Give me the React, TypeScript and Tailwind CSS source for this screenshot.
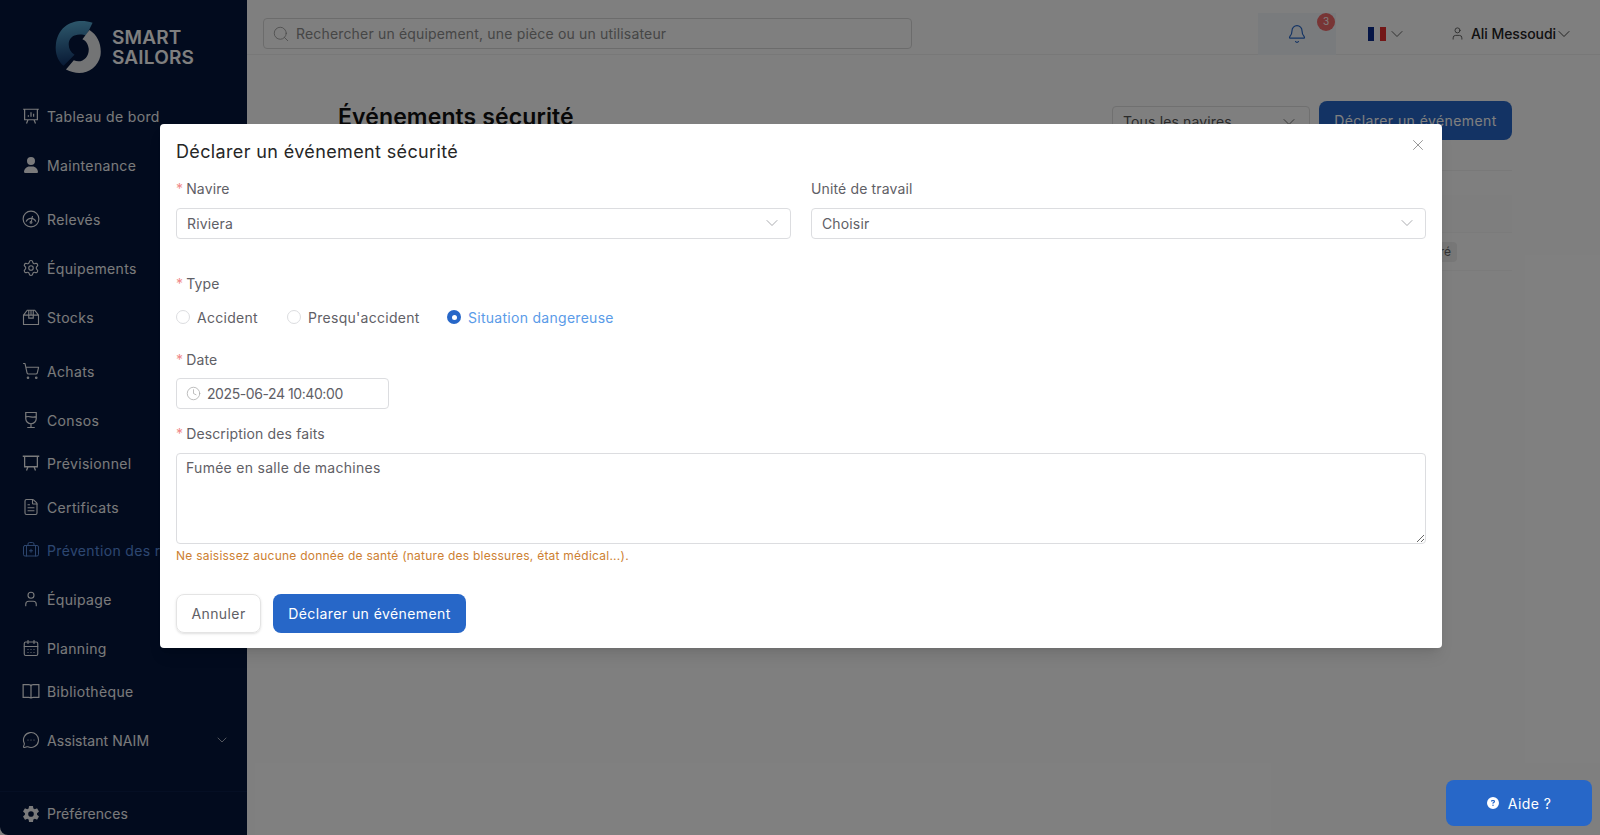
import { BriefcaseMedical, CalendarDays, ChevronDown, Clock, FileText, MessageCircleMore, Search, Settings, ShoppingCart, User, X, Bell } from "lucide-react";
import { IoSettingsSharp } from "react-icons/io5";
import { FaUser, FaCircleQuestion } from "react-icons/fa6";
import type { ReactNode } from "react";

const icon = "w-[18px] h-[18px]";

function BoardIcon() {
  return (
    <svg viewBox="0 0 24 24" className={icon} fill="none" stroke="currentColor" strokeWidth="1.6">
      <path d="M1.5 3h21M3.5 3v14h17V3M8 17l-2 5M16 17l2 5M8.5 13v-2M12 13V7M15.5 13V9" />
    </svg>
  );
}

function EaselIcon() {
  return (
    <svg viewBox="0 0 24 24" className={icon} fill="none" stroke="currentColor" strokeWidth="1.7">
      <path d="M1 3h22M3.5 3v14h17V3M8 17l-2 5M16 17l2 5M3.5 17h17" />
    </svg>
  );
}

function GaugeIcon() {
  return (
    <svg viewBox="0 0 24 24" className={icon} fill="none" stroke="currentColor" strokeWidth="1.5">
      <circle cx="12" cy="12" r="10.5" />
      <path d="M5.5 15.500a7 7 0 0 1 13 0M14 8l-1.500 7" />
      <circle cx="12" cy="16.500" r="1.200" />
    </svg>
  );
}

function BoxIcon() {
  return (
    <svg viewBox="0 0 24 24" className={icon} fill="none" stroke="currentColor" strokeWidth="1.5">
      <path d="M2 9.500h20V22H2zM2 9.500 7 3h10l5 6.500M9 3v10.500h6V3M12 3v6" />
    </svg>
  );
}

function GlassIcon() {
  return (
    <svg viewBox="0 0 24 24" className={icon} fill="none" stroke="currentColor" strokeWidth="1.6">
      <path d="M5 2h14v8a7 7 0 0 1-14 0zM5 8c4-2.500 9 2 14-.5M12 17v5M7 22h10" />
    </svg>
  );
}

function BookIcon() {
  return (
    <svg viewBox="0 0 24 24" className={icon} fill="none" stroke="currentColor" strokeWidth="1.6">
      <path d="M1.500 3.500H9c1.700 0 3 1 3 2.500 0-1.500 1.300-2.500 3-2.500h7.500v17H15c-1.700 0-3 .5-3 1.500 0-1-1.300-1.500-3-1.500H1.500zM12 6v16" />
    </svg>
  );
}

const items: { label: string; icon: ReactNode; cls: string }[] = [
  { label: "Tableau de bord", icon: <BoardIcon />, cls: "" },
  { label: "Maintenance", icon: <FaUser className="w-[16px] h-[16px] ml-[1px]" />, cls: "mt-[25px]" },
  { label: "Relevés", icon: <GaugeIcon />, cls: "mt-[30px]" },
  { label: "Équipements", icon: <Settings className={icon} strokeWidth={1.5} />, cls: "mt-[25px]" },
  { label: "Stocks", icon: <BoxIcon />, cls: "mt-[25px]" },
  { label: "Achats", icon: <ShoppingCart className={icon} strokeWidth={1.5} />, cls: "mt-[30px]" },
  { label: "Consos", icon: <GlassIcon />, cls: "mt-[25px]" },
  { label: "Prévisionnel", icon: <EaselIcon />, cls: "mt-[19px]" },
  { label: "Certificats", icon: <FileText className={icon} strokeWidth={1.5} />, cls: "mt-[20px]" },
  { label: "Prévention des risques", icon: <BriefcaseMedical className={icon} strokeWidth={1.3} />, cls: "mt-[19px] text-[#5b8fe0]" },
  { label: "Équipage", icon: <User className={icon} strokeWidth={1.5} />, cls: "mt-[25px]" },
  { label: "Planning", icon: <CalendarDays className={icon} strokeWidth={1.5} />, cls: "mt-[25px]" },
  { label: "Bibliothèque", icon: <BookIcon />, cls: "mt-[19px]" },
];

function Logo() {
  return (
    <svg viewBox="0 0 60 60" preserveAspectRatio="none" className="w-[47px] h-[55px]">
      <defs>
        <linearGradient id="ring" x1="0.5" y1="0" x2="0.6" y2="1">
          <stop offset="0" stopColor="#5aaed6" />
          <stop offset="1" stopColor="#0e2f66" />
        </linearGradient>
      </defs>
      <path d="M48 3 C 28 -3 3 4 1 28 C 0 38 5 46 11 50 L 25 38 C 15 33 15 20 25 17 C 31 15 36 16 40 17 Z" fill="url(#ring)" />
      <path d="M44 11 C 55 17 60 28 58 39 C 54 55 34 63 14 54 L 24 44 C 35 48 44 40 43 31 C 42 25 38 22 35 21 Z" fill="#e6e8ea" />
    </svg>
  );
}

function Label({ children, required = true }: { children: ReactNode; required?: boolean }) {
  return (
    <div className="text-[14px] leading-[20px] text-[#5f6066] tracking-[0.01em]">
      {required && <span className="text-[#f08a8a] mr-[3px]">*</span>}
      {children}
    </div>
  );
}

function SelectBox({ value }: { value: string }) {
  return (
    <div className="mt-[9px] h-[31px] pb-[1px] rounded border border-[#dcdde0] flex items-center justify-between pl-[10px] pr-[8px] text-[14px] text-[#5f6066] tracking-[0.01em]">
      <span>{value}</span>
      <ChevronDown className="w-[20px] h-[20px] text-[#9a9ba0]" strokeWidth={1} />
    </div>
  );
}

function Radio({ label, checked = false, cls }: { label: string; checked?: boolean; cls: string }) {
  return (
    <div className={`flex items-center gap-[7px] text-[14px] tracking-[0.02em] ${cls}`}>
      {checked ? (
        <span className="w-[14px] h-[14px] rounded-full bg-[#2767c8] flex items-center justify-center">
          <span className="w-[5px] h-[5px] rounded-full bg-white" />
        </span>
      ) : (
        <span className="w-[14px] h-[14px] rounded-full border border-[#dcdde0] bg-white" />
      )}
      <span>{label}</span>
    </div>
  );
}

export default function App() {
  return (
    <div className="relative w-full h-[835px] overflow-hidden bg-white flex font-['Inter',sans-serif]">
      <aside className="w-[247px] h-full bg-[#04163c] text-[#f4f5f7] flex flex-col rounded-bl-lg shrink-0">
        <div className="h-[104px] pl-[55px] pt-[20px] flex items-start gap-[10px]">
          <Logo />
          <div className="mt-[8px] text-[19px] leading-[20px] font-semibold text-white tracking-[0.01em]">
            SMART<br />SAILORS
          </div>
        </div>
        <nav className="flex-1 flex flex-col whitespace-nowrap overflow-hidden">
          {items.map((it) => (
            <div key={it.label} className={`h-[24px] pl-[22px] flex items-center text-[14px] tracking-[0.025em] ${it.cls}`}>
              <span className="w-[25px] flex">{it.icon}</span>
              {it.label}
            </div>
          ))}
          <div className="h-[24px] mt-[25px] pl-[22px] pr-[17px] flex items-center justify-between text-[14px] tracking-[0.005em]">
            <span className="flex items-center">
              <span className="w-[25px] flex"><MessageCircleMore className={icon} strokeWidth={1.5} /></span>
              Assistant NAIM
            </span>
            <ChevronDown className="w-[16px] h-[16px]" strokeWidth={1} />
          </div>
        </nav>
        <div className="h-[44px] border-t border-[#0b1f49] pl-[22px] flex items-center text-[14px] tracking-[0.005em]">
          <span className="w-[25px] flex"><IoSettingsSharp className={icon} /></span>
          Préférences
        </div>
      </aside>

      <main className="flex-1 min-w-0 bg-[#ffffff]">
        <header className="h-[55px] border-b border-[#f0f0f0] flex items-center pl-[16px] pt-[13px]">
          <div className="w-[649px] h-[31px] border border-[#d9d9d9] rounded flex items-center pl-[8px] gap-[6px] text-[14px] text-[#8c8c8c] tracking-[0.012em]">
            <Search className="w-[18px] h-[18px]" strokeWidth={1} />
            Rechercher un équipement, une pièce ou un utilisateur
          </div>
          <div className="ml-[346px] w-[78px] h-[42px] bg-[#f2f6fb] relative flex items-center justify-center">
            <Bell className="w-[20px] h-[20px] text-[#2767c8]" strokeWidth={1.4} />
            <span className="absolute left-[59px] top-[0px] w-[18px] h-[18px] rounded-full bg-[#f06a6a] text-white text-[10px] flex items-center justify-center">3</span>
          </div>
          <div className="ml-[32px] flex items-center gap-[1px]">
            <span className="flex w-[18px] h-[14px]">
              <span className="flex-1 bg-[#0a2a8c]" />
              <span className="flex-1 bg-white" />
              <span className="flex-1 bg-[#e62e2e]" />
            </span>
            <ChevronDown className="w-[20px] h-[20px] text-[#444]" strokeWidth={1} />
          </div>
          <div className="ml-[43px] flex items-center gap-[6px] text-[14px] text-[#222] font-medium tracking-[-0.005em]">
            <User className="w-[15px] h-[15px] text-[#555]" strokeWidth={1.4} />
            <span className="flex items-center">Ali Messoudi<ChevronDown className="w-[20px] h-[20px] -ml-[2px]" strokeWidth={1} /></span>
          </div>
        </header>
        <div className="pl-[91px] pr-[88px] pt-[46px]">
          <div className="flex justify-between items-start h-[70px] border-b border-[#f2f2f2]">
            <h1 className="-mt-[1px] text-[23px] font-semibold text-[#111] tracking-[0.005em]">Événements sécurité</h1>
            <div className="flex gap-[9px]">
              <div className="mt-[5px] w-[198px] h-[31px] border border-[#e0e0e0] rounded px-[10px] flex items-center justify-between text-[14px] text-[#555] tracking-[0.01em]">
                Tous les navires
                <ChevronDown className="w-[20px] h-[20px]" strokeWidth={1} />
              </div>
              <div className="w-[193px] h-[39px] bg-[#2767c8] rounded-lg text-white text-[14px] tracking-[0.03em] flex items-center justify-center">
                Déclarer un événement
              </div>
            </div>
          </div>
          <div className="mt-[24px] h-[38px] bg-[#fdfdfd] border-b border-[#f6f6f6]" />
          <div className="h-[38px] border-b border-[#f6f6f6] flex items-center justify-end pr-[55px]">
            <span className="h-[20px] pl-2 pr-[6px] bg-[#eeeeee] rounded text-[12px] text-[#666] flex items-center">Déclaré</span>
          </div>
        </div>
      </main>

      <div className="absolute inset-0 bg-black/50" />

      <div className="absolute left-[160px] top-[124px] w-[1282px] h-[524px] bg-white rounded shadow-lg px-[16px] pt-[17px]">
        <X className="absolute right-[15px] top-[12px] w-[18px] h-[18px] text-[#777]" strokeWidth={1} />
        <div className="text-[18px] leading-[22px] text-[#262626] tracking-[0.02em]">Déclarer un événement sécurité</div>
        <div className="mt-[16px] grid grid-cols-2 gap-[20px]">
          <div>
            <Label>Navire</Label>
            <SelectBox value="Riviera" />
          </div>
          <div>
            <Label required={false}>Unité de travail</Label>
            <SelectBox value="Choisir" />
          </div>
        </div>
        <div className="mt-[35px]"><Label>Type</Label></div>
        <div className="mt-[13px] h-[20px] flex items-center">
          <Radio label="Accident" cls="text-[#5f6066] w-[111px]" />
          <Radio label="Presqu'accident" cls="text-[#5f6066] w-[160px]" />
          <Radio label="Situation dangereuse" checked cls="text-[#5a9be8]" />
        </div>
        <div className="mt-[23px]"><Label>Date</Label></div>
        <div className="mt-2 w-[213px] h-[31px] pb-[1px] rounded border border-[#dcdde0] flex items-center pl-[9px] gap-[6px] text-[14px] text-[#5f6066] tracking-[-0.03em]">
          <Clock className="w-[15px] h-[15px] text-[#a8a8a8]" strokeWidth={1.2} />
          2025-06-24 10:40:00
        </div>
        <div className="mt-[15px]"><Label>Description des faits</Label></div>
        <textarea
          readOnly
          defaultValue="Fumée en salle de machines"
          className="mt-[9px] block w-full h-[91px] rounded border border-[#dcdde0] px-[9px] py-[4px] text-[14px] leading-[20px] text-[#5f6066] tracking-[0.02em] outline-none"
        />
        <div className="mt-[4px] text-[12px] leading-[16px] text-[#cd7f32] tracking-[0.02em]">
          Ne saisissez aucune donnée de santé (nature des blessures, état médical...).
        </div>
        <div className="mt-[30px] flex gap-[12px]">
          <div className="w-[85px] h-[39px] rounded-lg border border-[#e4e4e4] shadow-sm flex items-center justify-center text-[14px] text-[#5f6066] tracking-[0.03em]">
            Annuler
          </div>
          <div className="w-[193px] h-[39px] rounded-lg bg-[#2767c8] text-white flex items-center justify-center text-[14px] tracking-[0.03em]">
            Déclarer un événement
          </div>
        </div>
      </div>

      <div className="absolute left-[1446px] top-[780px] w-[146px] h-[46px] bg-[#2767c8] rounded-lg text-white text-[14px] tracking-[0.03em] flex items-center justify-center gap-[9px]">
        <FaCircleQuestion className="w-[12px] h-[12px]" />
        Aide ?
      </div>
    </div>
  );
}
